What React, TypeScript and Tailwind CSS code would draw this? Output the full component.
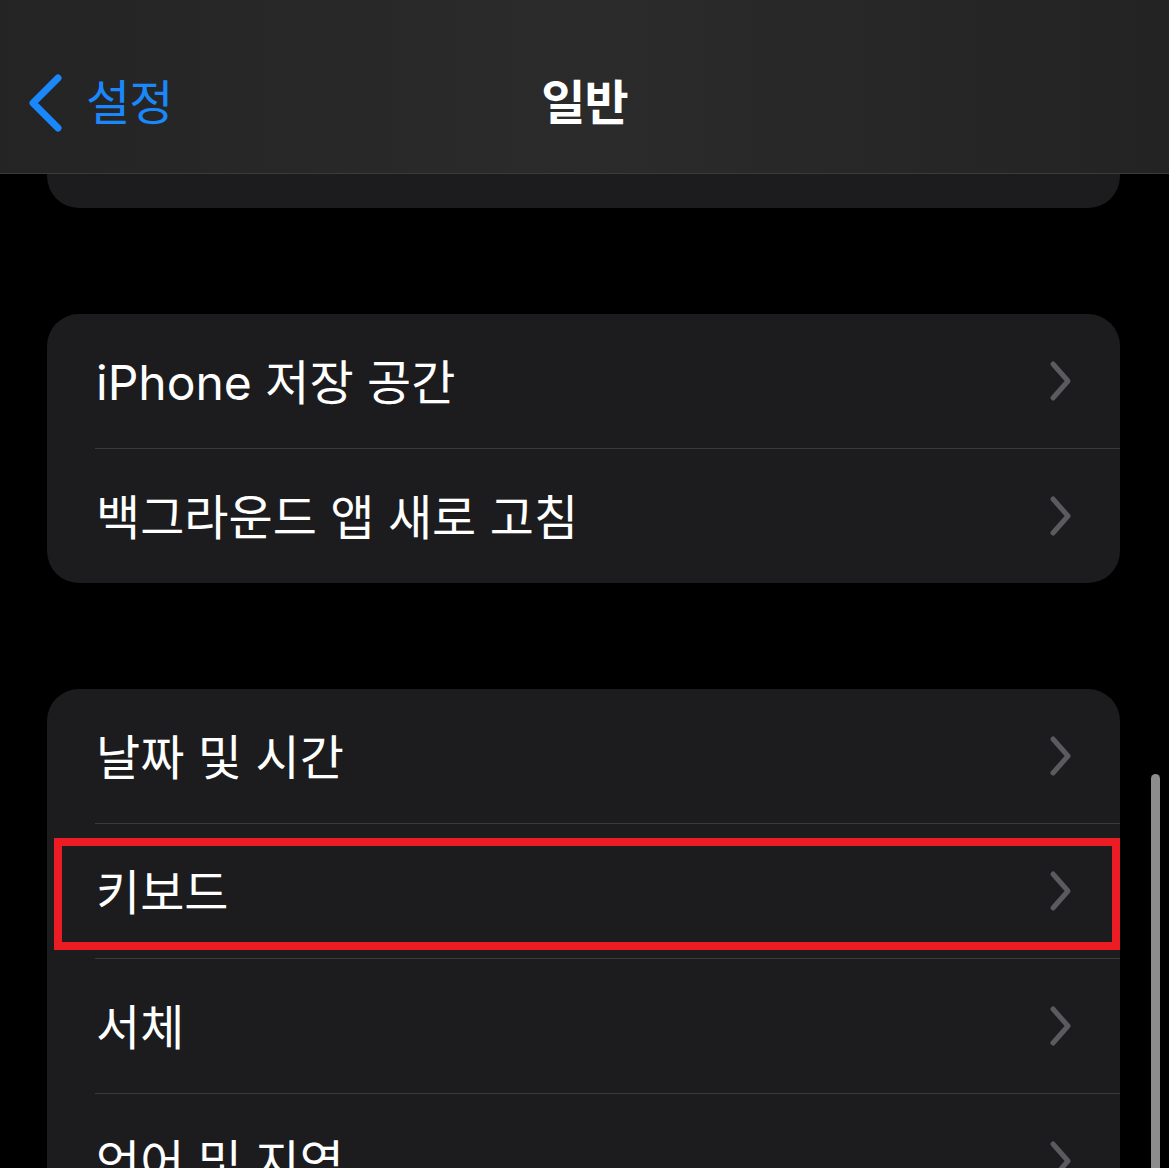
import React from "react";

const font = { fontFamily: '"Inter", "Noto Sans CJK KR", sans-serif' };

function Chevron() {
  return (
    <svg width="26" height="42" viewBox="0 0 26 42" className="shrink-0">
      <path d="M5 4 L20 21 L5 38" fill="none" stroke="#5b5b5f" strokeWidth="5" strokeLinecap="round" strokeLinejoin="round" />
    </svg>
  );
}

function Row({ label, last, highlight }: { label: string; last?: boolean; highlight?: boolean }) {
  return (
    <div className="relative">
      <div className="flex h-[134px] items-center justify-between pl-[49px] pr-[46px]">
        <span className="mt-[4px] text-[48px] font-normal leading-none tracking-[0px] text-white">{label}</span>
        <Chevron />
      </div>
      {!last && <div className="ml-[48px] h-px bg-[#3a3a3c]" />}
      {highlight && (
        <div className="pointer-events-none absolute left-[7px] right-0 top-[14px] h-[112px] border-[8px] border-[#ec1c24]" />
      )}
    </div>
  );
}

export default function App() {
  return (
    <div className="relative h-[1168px] w-[1169px] overflow-hidden bg-black" style={font}>
      <div className="flex h-[174px] items-center border-b border-[#3b3b3b] bg-gradient-to-r from-[#242424] via-[#2b2b2b] to-[#232323] pt-[33px]">
        <div className="flex w-[300px] items-center pl-[27px]">
          <svg width="36" height="58" viewBox="0 0 36 58">
            <path d="M31 4 L6 29 L31 54" fill="none" stroke="#1a88fb" strokeWidth="7" strokeLinecap="round" strokeLinejoin="round" />
          </svg>
          <span className="ml-[23px] text-[48px] leading-none tracking-[-1px] text-[#1a88fb]">설정</span>
        </div>
        <div className="flex flex-1 justify-center pr-[300px]">
          <span className="text-[48px] font-semibold leading-none tracking-[-1px] text-white">일반</span>
        </div>
      </div>

      <div className="flex flex-col px-[47px] pr-[49px]">
        <div className="h-[34px] rounded-b-[32px] bg-[#1c1c1e]" />
        <div className="mt-[106px] overflow-hidden rounded-[32px] bg-[#1c1c1e]">
          <Row label="iPhone 저장 공간" />
          <Row label="백그라운드 앱 새로 고침" last />
        </div>
        <div className="mt-[106px] overflow-visible rounded-t-[32px] bg-[#1c1c1e]">
          <Row label="날짜 및 시간" />
          <Row label="키보드" highlight />
          <Row label="서체" />
          <Row label="언어 및 지역" />
        </div>
      </div>

      <div className="absolute left-[1151px] top-[774px] h-[420px] w-[9px] rounded-full bg-[#8c8c8c]" />
    </div>
  );
}
